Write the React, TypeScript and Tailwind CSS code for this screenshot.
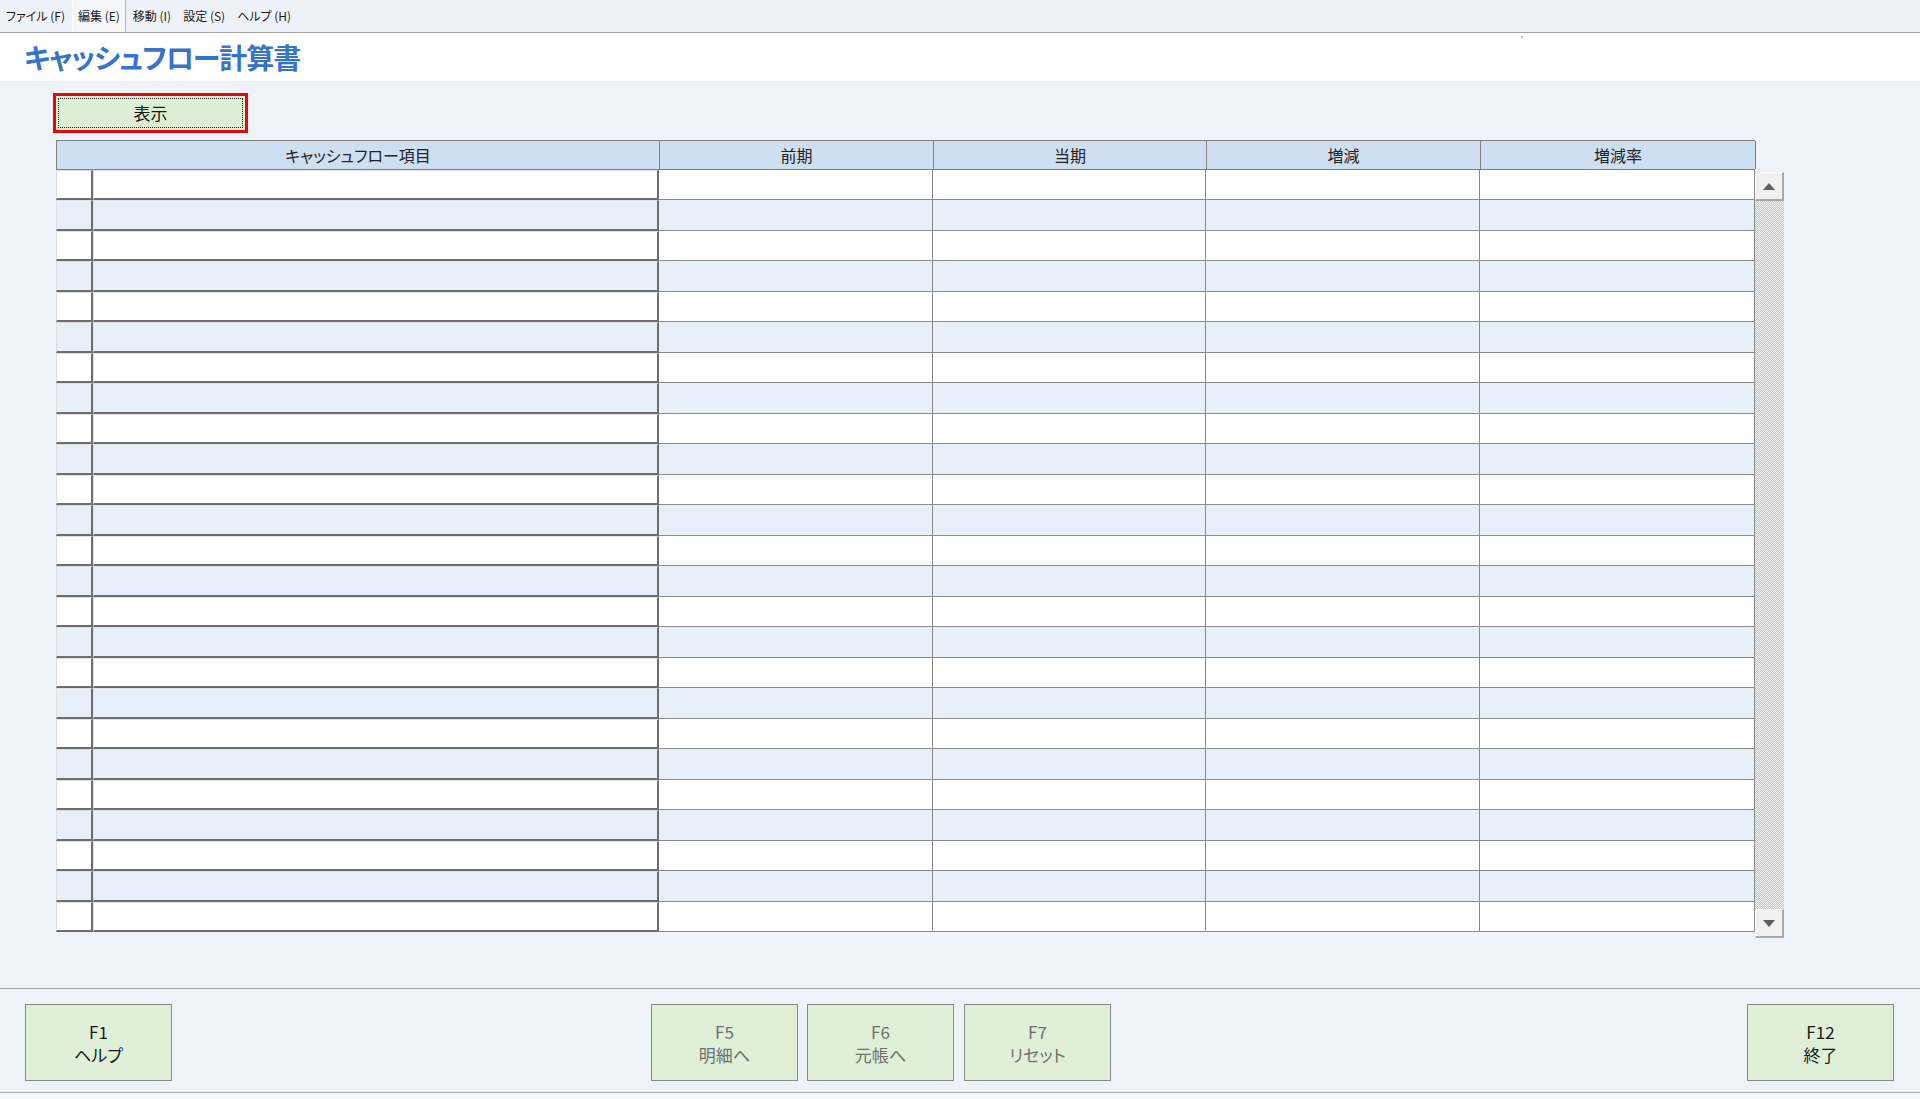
import React from 'react';

const menus = ['ファイル (F)', '編集 (E)', '移動 (I)', '設定 (S)', 'ヘルプ (H)'];
const rows = Array.from({ length: 25 }, (_, i) => i);

const FnButton: React.FC<{ fkey: string; label: string; disabled?: boolean; className?: string }> = ({
  fkey,
  label,
  disabled,
  className,
}) => (
  <button
    className={`w-[147px] h-[77px] bg-[#dfefd8] border border-[#868a86] flex flex-col items-center justify-center text-[17px] leading-[23px] ${
      disabled ? 'text-[#6f6f6f]' : 'text-[#1a1a1a]'
    } ${className ?? ''}`}
  >
    <span>{fkey}</span>
    <span>{label}</span>
  </button>
);

const ScrollArrow: React.FC<{ up?: boolean }> = ({ up }) => (
  <div className="h-[29px] w-full bg-[#f0f0f0] border-t border-l border-t-white border-l-white border-b-2 border-r-2 border-b-[#a8a8a8] border-r-[#a8a8a8] flex items-center justify-center">
    <svg width="12" height="7" viewBox="0 0 12 7">
      {up ? <path d="M6 0 L12 7 L0 7 Z" fill="#5f5f5f" /> : <path d="M0 0 L12 0 L6 7 Z" fill="#5f5f5f" />}
    </svg>
  </div>
);

export default function App() {
  return (
    <div className="w-[1920px] h-[1099px] flex flex-col bg-[#eef3fa] text-[#1a1a1a] font-['Noto_Sans_CJK_JP','Noto_Sans',sans-serif] [font-feature-settings:'palt']">
      {/* menu bar */}
      <div className="h-[33px] bg-[#eef2f8] border-b border-[#a3a3a3] flex items-stretch gap-[12px] pl-[6px] text-[12px]">
        {menus.map((m, i) => (
          <div
            key={m}
            className={`flex items-center ${
              i === 1 ? 'bg-[#f5f7fa] border-l border-r border-l-white border-r-[#b4b4b4] px-[5px] -mx-[5px]' : ''
            }`}
          >
            {m}
          </div>
        ))}
      </div>

      {/* title */}
      <div className="relative h-[48px] bg-white flex items-center pl-[24px]">
        <h1 className="text-[28px] font-bold text-[#3574c9] tracking-[-1px]">キャッシュフロー計算書</h1>
        <span className="absolute left-[1521px] top-[3px] w-[2px] h-[2px] bg-[#c0c0c0]" />
      </div>

      {/* main */}
      <div className="flex-1 pl-[53px] pt-[12px]">
        <div className="w-[195px] h-[40px] border-[3px] border-[#e10a0a] bg-[#dcefd5] p-[2px]">
          <div className="h-full border border-dotted border-[#222] flex items-center justify-center text-[17px]">表示</div>
        </div>

        <div className="mt-[7px] ml-[3px] flex items-start">
          <div className="w-[1699px]">
            <div className="grid grid-cols-[603px_274px_273px_274px_275px] h-[30px] bg-[#cedff1] border-t border-b border-l border-[#7f7f7f] text-[16px] text-[#222]">
              {['キャッシュフロー項目', '前期', '当期', '増減', '増減率'].map((h) => (
                <div key={h} className="border-r border-[#7f7f7f] flex items-center justify-center">
                  {h}
                </div>
              ))}
            </div>
            <div className="h-[762px] flex flex-col">
              {rows.map((r) => {
                const bg = r % 2 === 0 ? 'bg-white' : 'bg-[#e7eff9]';
                return (
                  <div key={r} className={`flex-1 grid grid-cols-[37px_566px_274px_273px_274px_275px] ${bg}`}>
                    <div className="border-l border-t border-[#dedede] border-r-2 border-b-2 border-r-[#6d6d6d] border-b-[#6d6d6d]" />
                    <div className="border-l border-t border-[#e2e2e2] border-r-2 border-b-2 border-r-[#6d6d6d] border-b-[#6d6d6d]" />
                    <div className="border-r border-b border-[#8a8a8a]" />
                    <div className="border-r border-b border-[#8a8a8a]" />
                    <div className="border-r border-b border-[#8a8a8a]" />
                    <div className="border-r border-b border-[#8a8a8a]" />
                  </div>
                );
              })}
            </div>
          </div>

          {/* scrollbar */}
          <div className="mt-[32px] w-[29px] h-[766px] flex flex-col">
            <ScrollArrow up />
            <div className="flex-1 bg-[image:repeating-conic-gradient(#c4c4c4_0_25%,#f4f4f4_0_50%)] bg-[length:2px_2px]" />
            <ScrollArrow />
          </div>
        </div>
      </div>

      {/* function keys */}
      <div className="h-[105px] border-t border-b border-[#a6a6a6] flex items-start pt-[15px] pl-[25px]">
        <FnButton fkey="F1" label="ヘルプ" />
        <FnButton fkey="F5" label="明細へ" disabled className="ml-[479px]" />
        <FnButton fkey="F6" label="元帳へ" disabled className="ml-[9px]" />
        <FnButton fkey="F7" label="リセット" disabled className="ml-[10px]" />
        <FnButton fkey="F12" label="終了" className="ml-[636px]" />
      </div>
      <div className="h-[6px] bg-[#f4f7fb]" />
    </div>
  );
}
